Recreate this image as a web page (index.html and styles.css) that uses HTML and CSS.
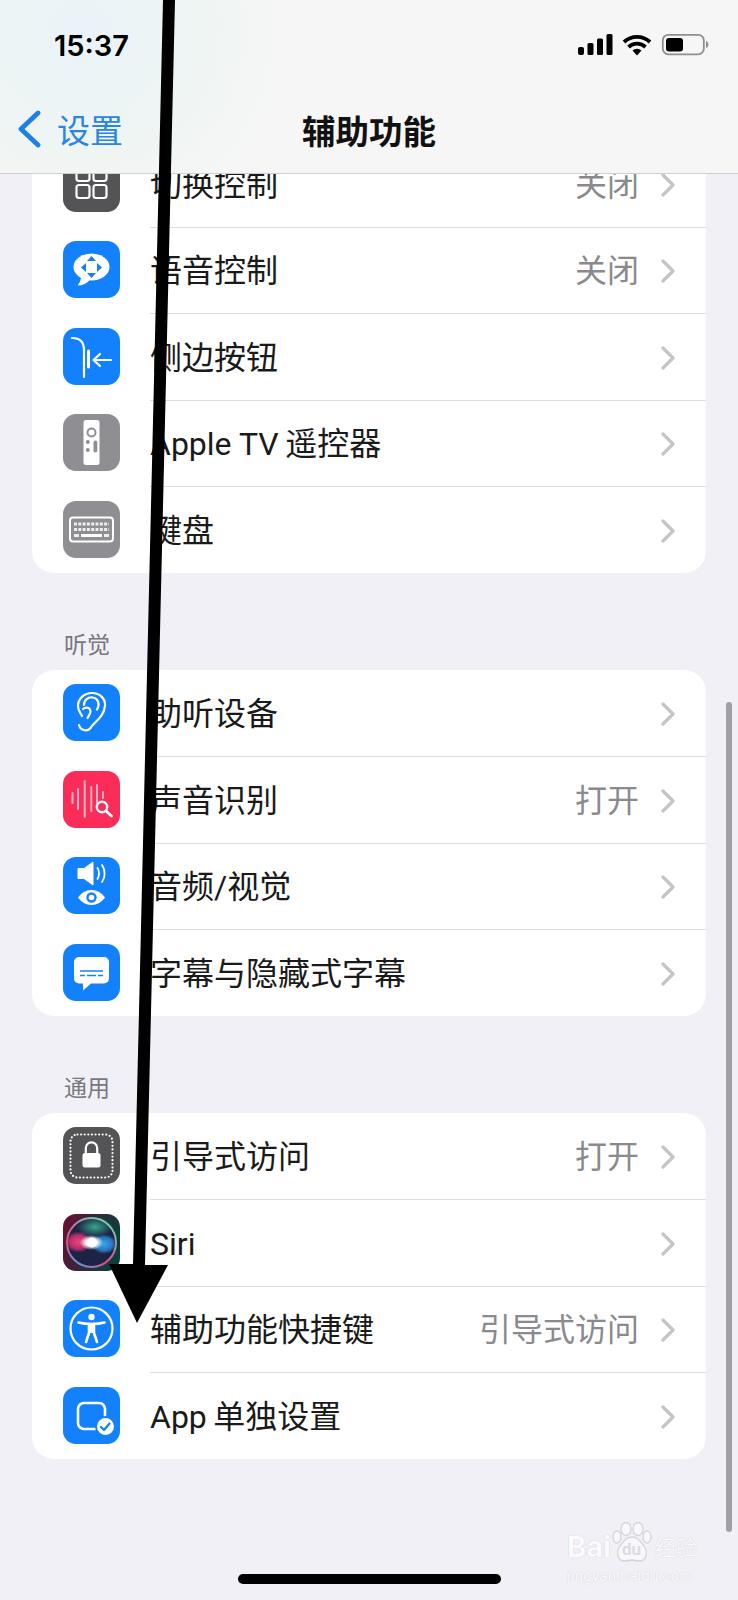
FILE: index.html
```html
<!DOCTYPE html>
<html lang="zh-CN">
<head>
    <meta charset="UTF-8">
    <meta name="viewport" content="width=device-width, initial-scale=1.0">
    <title>辅助功能</title>
    <link rel="stylesheet" href="styles.css">
</head>
<body>
    <svg class="defs" width="0" height="0">
        <symbol id="chev" viewBox="0 0 14 24">
            <path d="M2 2l10 10L2 22" fill="none" stroke="#c5c5c7" stroke-width="3.2" stroke-linecap="round" stroke-linejoin="round"/>
        </symbol>
        <linearGradient id="siriCorner" x1="0" y1="0" x2="1" y2="0.3">
            <stop offset="0" stop-color="#6a0c34"/>
            <stop offset="1" stop-color="#0b3f3c"/>
        </linearGradient>
        <linearGradient id="siriRing" x1="0.8" y1="0" x2="0.2" y2="1">
            <stop offset="0" stop-color="#5fe0b0"/>
            <stop offset="0.45" stop-color="#c9708e"/>
            <stop offset="0.7" stop-color="#e8487e"/>
            <stop offset="1" stop-color="#4aa6e8"/>
        </linearGradient>
        <radialGradient id="siriPink" cx="0.5" cy="0.5" r="0.5">
            <stop offset="0" stop-color="#f0447e"/>
            <stop offset="0.65" stop-color="#c8306c" stop-opacity="0.9"/>
            <stop offset="1" stop-color="#c8306c" stop-opacity="0"/>
        </radialGradient>
        <radialGradient id="siriBlue" cx="0.5" cy="0.5" r="0.5">
            <stop offset="0" stop-color="#35a8ee"/>
            <stop offset="0.65" stop-color="#2a80cc" stop-opacity="0.9"/>
            <stop offset="1" stop-color="#2a80cc" stop-opacity="0"/>
        </radialGradient>
        <radialGradient id="siriGreen" cx="0.5" cy="0.5" r="0.5">
            <stop offset="0" stop-color="#3fc8a0" stop-opacity="0.8"/>
            <stop offset="1" stop-color="#3fc8a0" stop-opacity="0"/>
        </radialGradient>
        <radialGradient id="siriCore" cx="0.5" cy="0.5" r="0.5">
            <stop offset="0" stop-color="#fff"/>
            <stop offset="0.5" stop-color="#fff" stop-opacity="0.9"/>
            <stop offset="1" stop-color="#fff" stop-opacity="0"/>
        </radialGradient>
    </svg>

    <div class="phone">
        <header class="topbar">
            <div class="status">
                <span class="time">15:37</span>
                <svg class="status-icons" width="131" height="24" viewBox="0 0 131 24">
                    <rect x="0" y="14" width="6" height="8" rx="2"/>
                    <rect x="9.500" y="10" width="6" height="12" rx="1.500"/>
                    <rect x="19" y="5.500" width="6" height="16.500" rx="1.500"/>
                    <rect x="28.500" y="1" width="6" height="21" rx="1.500"/>
                    <path d="M46 9A19 19 0 0 1 72 9M50.500 14A12.500 12.500 0 0 1 67.500 14" fill="none" stroke="#000" stroke-width="3.800"/>
                    <path d="M59 22.500L54.500 17.500A7 7 0 0 1 63.500 17.500Z"/>
                    <rect x="84.800" y="1.800" width="41" height="19.500" rx="5.500" fill="none" stroke="#8f8f8f" stroke-width="1.800"/>
                    <rect x="88" y="5" width="17" height="13.500" rx="3"/>
                    <path d="M128 8v7c1.500-.5 2.500-2 2.500-3.500S129.500 8.500 128 8z" fill="#8f8f8f"/>
                </svg>
            </div>
            <nav class="navrow">
                <a class="back">
                    <svg width="24" height="38" viewBox="0 0 24 38"><path d="M21 3L4 19l17 16" fill="none" stroke="#1c80e6" stroke-width="4.800" stroke-linecap="round" stroke-linejoin="round"/></svg>
                    <span>设置</span>
                </a>
                <h1>辅助功能</h1>
            </nav>
        </header>

        <main class="content">
            <section class="card">
                <div class="row">
                    <svg class="icon" viewBox="0 0 57 57">
                        <rect width="57" height="57" rx="13" fill="#545456"/>
                        <g fill="none" stroke="#fff" stroke-width="2.200">
                            <rect x="13.500" y="13" width="13" height="13" rx="2.500"/>
                            <rect x="30.500" y="13" width="13" height="13" rx="2.500"/>
                            <rect x="13.500" y="30" width="13" height="13" rx="2.500"/>
                            <rect x="30.500" y="30" width="13" height="13" rx="2.500"/>
                        </g>
                    </svg>
                    <div class="row-body">
                        <span class="label">切换控制</span>
                        <span class="value">关闭</span>
                        <svg class="chev"><use href="#chev"/></svg>
                    </div>
                </div>
                <div class="row">
                    <svg class="icon" viewBox="0 0 57 57">
                        <rect width="57" height="57" rx="13" fill="#1281fb"/>
                        <ellipse cx="28.500" cy="26" rx="18" ry="13.500" fill="#fff"/>
                        <path d="M18 36c0 3-1.500 6-3.500 8.500 4.500 0 9-2 12-5z" fill="#fff"/>
                        <path d="M28.500 15l4.500 5h-9zM28.500 37l-4.500-5h9zM18 26.500l5-4.500v9zM39 26.500l-5-4.500v9z" fill="#1281fb"/>
                    </svg>
                    <div class="row-body">
                        <span class="label">语音控制</span>
                        <span class="value">关闭</span>
                        <svg class="chev"><use href="#chev"/></svg>
                    </div>
                </div>
                <div class="row">
                    <svg class="icon" viewBox="0 0 57 57">
                        <rect width="57" height="57" rx="13" fill="#1281fb"/>
                        <path d="M9 10c7 0 12 3.500 12 12v27" fill="none" stroke="#fff" stroke-width="2.200" stroke-linecap="round"/>
                        <path d="M25.500 23v16" stroke="#fff" stroke-width="3" stroke-linecap="round"/>
                        <path d="M48 32H31M37 26l-6.500 6 6.500 6" fill="none" stroke="#fff" stroke-width="2.200" stroke-linecap="round" stroke-linejoin="round"/>
                    </svg>
                    <div class="row-body">
                        <span class="label">侧边按钮</span>
                        <svg class="chev"><use href="#chev"/></svg>
                    </div>
                </div>
                <div class="row">
                    <svg class="icon" viewBox="0 0 57 57">
                        <rect width="57" height="57" rx="13" fill="#8e8e93"/>
                        <rect x="20.500" y="6" width="16" height="45" rx="2.500" fill="#fff"/>
                        <circle cx="28.500" cy="18.500" r="4" fill="none" stroke="#8e8e93" stroke-width="2"/>
                        <circle cx="24.800" cy="28" r="2" fill="#8e8e93"/>
                        <circle cx="24.800" cy="36" r="2" fill="#8e8e93"/>
                        <rect x="30.500" y="26.500" width="3.800" height="12" rx="1.900" fill="#8e8e93"/>
                    </svg>
                    <div class="row-body">
                        <span class="label">Apple TV&#8201;遥控器</span>
                        <svg class="chev"><use href="#chev"/></svg>
                    </div>
                </div>
                <div class="row">
                    <svg class="icon" viewBox="0 0 57 57">
                        <rect width="57" height="57" rx="13" fill="#8e8e93"/>
                        <rect x="7" y="16.500" width="43" height="24" rx="3" fill="none" stroke="#fff" stroke-width="2"/>
                        <path d="M11 23h35M11 28.500h35" stroke="#fff" stroke-width="3" stroke-dasharray="3 1.300" opacity="0.85"/>
                        <path d="M11 34.500h5M41 34.500h5" stroke="#fff" stroke-width="3" opacity="0.85"/>
                        <path d="M18 34.500h21" stroke="#fff" stroke-width="3"/>
                    </svg>
                    <div class="row-body">
                        <span class="label">键盘</span>
                        <svg class="chev"><use href="#chev"/></svg>
                    </div>
                </div>
            </section>

            <h2 class="section-title">听觉</h2>
            <section class="card">
                <div class="row">
                    <svg class="icon" viewBox="0 0 57 57">
                        <rect width="57" height="57" rx="13" fill="#1281fb"/>
                        <g fill="none" stroke="#fff" stroke-width="2.200" stroke-linecap="round">
                            <path d="M16 41c1 5 8 7.500 11.500 3 3.500-6 13-10 14.500-22 .8-7-5-13-13-13s-14 6-14 13c0 5 2.500 6.500 4 10"/>
                            <path d="M21 21c0-5 4-8 8.500-7.500 6 .7 7.500 7 4.500 12"/>
                            <path d="M20 25c3-2.500 7-1.500 7.500 2 .3 2.500-1.500 4-3 7"/>
                        </g>
                    </svg>
                    <div class="row-body">
                        <span class="label">助听设备</span>
                        <svg class="chev"><use href="#chev"/></svg>
                    </div>
                </div>
                <div class="row">
                    <svg class="icon" viewBox="0 0 57 57">
                        <rect width="57" height="57" rx="13" fill="#fb2c57"/>
                        <g stroke="#ffb3c4" stroke-width="2" stroke-linecap="round">
                            <path d="M9.500 22v10M15 18v20M21.700 10v36M28.300 16v24M34 14v20M40 21v6"/>
                        </g>
                        <circle cx="39" cy="36" r="5.200" fill="#fb2c57" stroke="#fff" stroke-width="2.400"/>
                        <path d="M43 40l5.500 5" stroke="#fff" stroke-width="2.800" stroke-linecap="round"/>
                    </svg>
                    <div class="row-body">
                        <span class="label">声音识别</span>
                        <span class="value">打开</span>
                        <svg class="chev"><use href="#chev"/></svg>
                    </div>
                </div>
                <div class="row">
                    <svg class="icon" viewBox="0 0 57 57">
                        <rect width="57" height="57" rx="13" fill="#1281fb"/>
                        <path d="M15 11.500h6l9-6.500v23l-9-6.500h-6z" fill="#fff" stroke="#fff" stroke-linejoin="round"/>
                        <path d="M34.500 11c2 3 2 8 0 11M39 8c3.500 5 3.500 12 0 17" fill="none" stroke="#fff" stroke-width="1.800" stroke-linecap="round"/>
                        <path d="M15 40.500c3-4.500 8-7.500 13.500-7.500s10.500 3 13.500 7.500c-3 4.500-8 7.500-13.500 7.500S18 45 15 40.500z" fill="#fff"/>
                        <circle cx="28.500" cy="40.500" r="4" fill="#fff" stroke="#1281fb" stroke-width="2.400"/>
                    </svg>
                    <div class="row-body">
                        <span class="label">音频/视觉</span>
                        <svg class="chev"><use href="#chev"/></svg>
                    </div>
                </div>
                <div class="row">
                    <svg class="icon" viewBox="0 0 57 57">
                        <rect width="57" height="57" rx="13" fill="#1281fb"/>
                        <path d="M16 13h25a5 5 0 0 1 5 5v16.500a5 5 0 0 1-5 5H28L20 46.500V39.500h-4a5 5 0 0 1-5-5V18a5 5 0 0 1 5-5z" fill="#fff"/>
                        <path d="M17 27h23M17 31.500h5M24 31.500h9M35 31.500h5" stroke="#1281fb" stroke-width="1.700"/>
                    </svg>
                    <div class="row-body">
                        <span class="label">字幕与隐藏式字幕</span>
                        <svg class="chev"><use href="#chev"/></svg>
                    </div>
                </div>
            </section>

            <h2 class="section-title">通用</h2>
            <section class="card">
                <div class="row">
                    <svg class="icon" viewBox="0 0 57 57">
                        <rect width="57" height="57" rx="13" fill="#545456"/>
                        <rect x="7.500" y="7.500" width="42" height="43" rx="7" fill="none" stroke="#fff" stroke-width="2.200" stroke-dasharray="0 3.600" stroke-linecap="round"/>
                        <rect x="19.500" y="26" width="18" height="14.500" rx="2.500" fill="#fff"/>
                        <path d="M22.800 26v-5a5.700 5.700 0 0 1 11.400 0v5" fill="none" stroke="#fff" stroke-width="2.200"/>
                    </svg>
                    <div class="row-body">
                        <span class="label">引导式访问</span>
                        <span class="value">打开</span>
                        <svg class="chev"><use href="#chev"/></svg>
                    </div>
                </div>
                <div class="row">
                    <svg class="icon" viewBox="0 0 57 57">
                        <rect width="57" height="57" rx="13" fill="url(#siriCorner)"/>
                        <circle cx="28.500" cy="28.500" r="25.500" fill="#1c2445"/>
                        <ellipse cx="32" cy="13" rx="18" ry="10" fill="url(#siriGreen)"/>
                        <ellipse cx="15.500" cy="28" rx="13.500" ry="10.500" fill="url(#siriPink)"/>
                        <ellipse cx="41" cy="30" rx="13" ry="10" fill="url(#siriBlue)"/>
                        <ellipse cx="28.500" cy="28.500" rx="12" ry="7.500" fill="url(#siriCore)"/>
                        <circle cx="29" cy="28.500" r="5" fill="#fff"/>
                        <circle cx="28.500" cy="28.500" r="24.500" fill="none" stroke="url(#siriRing)" stroke-width="2"/>
                    </svg>
                    <div class="row-body">
                        <span class="label">Siri</span>
                        <svg class="chev"><use href="#chev"/></svg>
                    </div>
                </div>
                <div class="row">
                    <svg class="icon" viewBox="0 0 57 57">
                        <rect width="57" height="57" rx="13" fill="#1281fb"/>
                        <circle cx="28.500" cy="28.500" r="21" fill="none" stroke="#fff" stroke-width="2.200"/>
                        <circle cx="28.500" cy="17" r="3.200" fill="#fff"/>
                        <path d="M15.500 22.500c4 1 8.500 1.500 13 1.500s9-.5 13-1.500" fill="none" stroke="#fff" stroke-width="2.600" stroke-linecap="round"/>
                        <path d="M26 24v9l-3 9M31 24v9l3 9" fill="none" stroke="#fff" stroke-width="2.600" stroke-linecap="round" stroke-linejoin="round"/>
                        <path d="M26 24h5v9h-5z" fill="#fff"/>
                    </svg>
                    <div class="row-body">
                        <span class="label">辅助功能快捷键</span>
                        <span class="value">引导式访问</span>
                        <svg class="chev"><use href="#chev"/></svg>
                    </div>
                </div>
                <div class="row">
                    <svg class="icon" viewBox="0 0 57 57">
                        <rect width="57" height="57" rx="13" fill="#1281fb"/>
                        <rect x="15" y="16" width="27" height="26" rx="6" fill="none" stroke="#fff" stroke-width="2.600"/>
                        <circle cx="42.500" cy="39.500" r="9.500" fill="#fff" stroke="#1281fb" stroke-width="2"/>
                        <path d="M38 40l3 3 5.500-6.500" fill="none" stroke="#1281fb" stroke-width="2.200" stroke-linecap="round" stroke-linejoin="round"/>
                    </svg>
                    <div class="row-body">
                        <span class="label">App&#8201;单独设置</span>
                        <svg class="chev"><use href="#chev"/></svg>
                    </div>
                </div>
            </section>
        </main>

        <div class="scrollbar"></div>
        <div class="home-bar"></div>

        <!-- seta preta desenhada por cima da captura -->
        <svg class="arrow" width="738" height="1600" viewBox="0 0 738 1600">
            <path d="M163 0h12l-30 1265h23l-31 58-28-59h24z" fill="#000"/>
        </svg>

        <div class="watermark">
            <div class="wm-top">
                <span class="wm-bai">Bai</span>
                <div class="wm-paw">
                    <svg width="40" height="42" viewBox="0 0 40 42">
                        <g fill="#f8f8fb" stroke="#d4d4da" stroke-width="1.300">
                            <ellipse cx="5" cy="15" rx="4" ry="6"/>
                            <ellipse cx="14" cy="7" rx="5" ry="6.500"/>
                            <ellipse cx="26" cy="7" rx="5" ry="6.500"/>
                            <ellipse cx="35" cy="15" rx="4" ry="6"/>
                            <path d="M20 15c6 0 8 4 12 9 4 6 3 15-5 15-3 0-4-1-7-1s-4 1-7 1c-8 0-9-9-5-15 4-5 6-9 12-9z"/>
                        </g>
                    </svg>
                    <span class="wm-du">du</span>
                </div>
                <span class="wm-cn">经验</span>
            </div>
            <div class="wm-url">jingyan.baidu.com</div>
        </div>
    </div>
</body>
</html>
```

FILE: styles.css
```css
* {
    box-sizing: border-box;
}

body {
    margin: 0;
    background-color: #f1f0f6;
    font-family: Roboto, "Noto Sans CJK SC", sans-serif;
}

.defs {
    position: absolute;
}

.phone {
    position: relative;
    width: 738px;
    height: 1600px;
    overflow: hidden;
    background-color: #f1f0f6;
}

/* barra superior */
.topbar {
    position: absolute;
    top: 0;
    left: 0;
    width: 100%;
    height: 174px;
    z-index: 2;
    background: radial-gradient(ellipse 210px 210px at 80px 30px, #e9f3f8 0%, rgba(239, 245, 243, 0.95) 60%, rgba(246, 246, 246, 0) 100%), #f6f6f6;
    border-bottom: 1px solid #cfcfd1;
}

.status {
    display: flex;
    align-items: center;
    justify-content: space-between;
    height: 87px;
    padding: 3px 29px 0 54px;
}

.time {
    font-family: Inter, sans-serif;
    font-size: 29px;
    font-weight: 600;
    color: #000;
}

.status-icons {
    fill: #000;
}

.navrow {
    display: grid;
    grid-template-columns: 1fr auto 1fr;
    align-items: center;
    height: 84px;
}

.back {
    display: flex;
    align-items: center;
    gap: 16px;
    padding-left: 17px;
    color: #2a86e0;
    font-size: 33px;
}

.navrow h1 {
    margin: 0;
    font-size: 33.5px;
    font-weight: 700;
    color: #111;
}

/* lista */
.content {
    padding: 140px 32px 0;
}

.card {
    background-color: #ffffff;
    border-radius: 22px;
    overflow: hidden;
}

.row {
    display: flex;
    align-items: center;
    height: 86.5px;
    padding-left: 31px;
}

.icon {
    width: 57px;
    height: 57px;
    flex-shrink: 0;
    margin-right: 30px;
}

.row-body {
    flex: 1;
    display: flex;
    align-items: center;
    height: 100%;
    padding: 2px 31px 0 0;
    border-top: 1px solid #dcdcde;
}

.row:first-child .row-body {
    border-top: 1px solid transparent;
}

.label {
    flex: 1;
    font-size: 32px;
    line-height: 40px;
    color: #1a1a1a;
}

.value {
    font-size: 32px;
    line-height: 40px;
    color: #8a8a8e;
    margin-right: 22px;
}

.chev {
    width: 14px;
    height: 24px;
}

.section-title {
    margin: 0;
    padding: 58px 0 9px 32px;
    font-size: 23px;
    line-height: 30px;
    font-weight: 400;
    color: #77777c;
}

/* por cima do conteudo */
.scrollbar {
    position: absolute;
    top: 702px;
    left: 726px;
    width: 6px;
    height: 830px;
    border-radius: 3px;
    background-color: #a0a0a6;
}

.home-bar {
    position: absolute;
    top: 1574px;
    left: 238px;
    width: 263px;
    height: 10px;
    border-radius: 5px;
    background-color: #000;
}

.arrow {
    position: absolute;
    top: 0;
    left: 0;
    z-index: 3;
}

.watermark {
    position: absolute;
    top: 1520px;
    left: 567px;
    width: 134px;
    color: #fbfbfd;
}

.wm-top {
    display: flex;
    align-items: flex-end;
    height: 44px;
}

.wm-bai {
    font-family: Inter, sans-serif;
    font-size: 29px;
    line-height: 34px;
    font-weight: 700;
    text-shadow: 0 0 1px #bdbdc4;
}

.wm-paw {
    position: relative;
    width: 40px;
    height: 42px;
    margin-left: 1px;
}

.wm-du {
    position: absolute;
    left: 10px;
    top: 17px;
    font-size: 17px;
    line-height: 20px;
    font-weight: 700;
    color: #dcdce2;
}

.wm-cn {
    font-size: 21px;
    line-height: 32px;
    margin-left: 3px;
    text-shadow: 0 0 1px #bdbdc4;
}

.wm-url {
    margin-top: 3px;
    font-size: 15.5px;
    line-height: 18px;
    white-space: nowrap;
    text-shadow: 0 0 1px #bdbdc4;
}
```
